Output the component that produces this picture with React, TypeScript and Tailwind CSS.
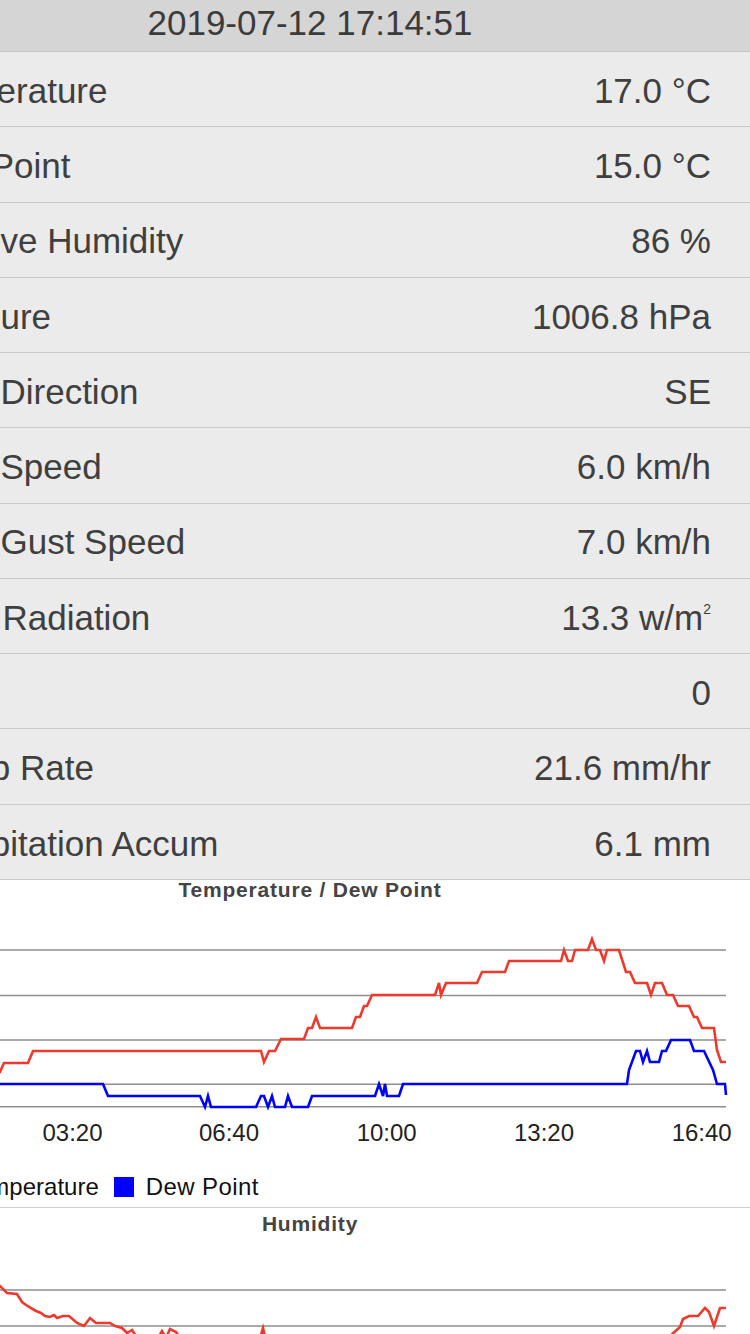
import React from 'react';

interface Reading {
    label: string;
    value: React.ReactNode;
}

const readings: Reading[] = [
    { label: 'Temperature', value: '17.0 °C' },
    { label: 'Dew Point', value: '15.0 °C' },
    { label: 'Relative Humidity', value: '86 %' },
    { label: 'Pressure', value: '1006.8 hPa' },
    { label: 'Wind Direction', value: 'SE' },
    { label: 'Wind Speed', value: '6.0 km/h' },
    { label: 'Wind Gust Speed', value: '7.0 km/h' },
    {
        label: 'Solar Radiation',
        value: (
            <>
                13.3 w/m<sup className="text-[14px] -top-[1.1em]">2</sup>
            </>
        ),
    },
    { label: 'UV', value: '0' },
    { label: 'Precip Rate', value: '21.6 mm/hr' },
    { label: 'Precipitation Accum', value: '6.1 mm' },
];

// chart coords are screen x, y relative to the svg top
const tempLine =
    '-10,180 0,172 4,163 28,163 33,151 261,151 264,162 269,151 275,151 281,139 304,139 308,128 312,128 316,117 320,128 352,128 356,117 360,117 364,106 367,106 372,95 435,95 439,83 441,95 446,83 477,83 482,72 505,72 509,61 561,61 564,50 568,61 572,61 575,50 588,50 592,39 596,50 600,50 604,61 607,50 619,50 626,72 630,72 635,83 647,83 651,95 655,83 662,83 667,95 673,95 678,106 689,106 694,117 697,117 702,128 714,128 717,150 721,162 726,162';

const dewLine =
    '-10,184 103,184 108,196 200,196 205,207 208,196 211,207 256,207 261,196 264,196 268,207 272,196 275,207 285,207 288,196 292,207 308,207 312,196 375,196 379,184 383,196 385,184 387,196 399,196 403,184 627,184 629,170 636,151 640,151 643,162 647,151 650,162 659,162 662,151 666,151 671,140 690,140 694,151 704,151 713,170 717,184 725,184 726,195';

const humidityLine =
    '-10,40 0,46 7,53 17,54 22,62 29,67 36,71 41,73 45,76 50,77 54,75 57,78 63,76 69,76 77,83 84,86 90,78 96,83 110,83 115,86 122,88 127,93 132,90 136,96 145,105 158,98 162,91 166,98 170,89 176,92 182,100 200,110 258,105 263,88 267,105 400,115 600,110 660,105 670,96 680,87 683,79 689,76 698,76 705,68 709,72 714,86 720,68 726,68';

const ticks = [
    { x: 72.5, label: '03:20' },
    { x: 229, label: '06:40' },
    { x: 386.7, label: '10:00' },
    { x: 544, label: '13:20' },
    { x: 701.7, label: '16:40' },
];

const ChartTitle: React.FC<{ title: string; className: string }> = ({ title, className }) => (
    <div className={`flex justify-center text-[21px] font-bold text-[#444] tracking-[0.8px] ${className}`}>
        {title}
    </div>
);

export default function App() {
    return (
        <div className="w-[750px] h-[1334px] overflow-hidden bg-white font-['Liberation_Sans',Arial,sans-serif]">
            {/* the view is scrolled sideways, so the left of every row sits off screen */}
            <div className="-ml-[130px] w-[880px]">
                <div className="h-[52px] pb-[4px] bg-[#d5d5d5] border-b border-[#c6c6c6] flex items-center justify-center text-[35px] text-[#3b3b3b]">
                    2019-07-12 17:14:51
                </div>

                {readings.map((r) => (
                    <div
                        key={r.label}
                        className="h-[75.27px] pt-[4px] bg-[#ebebeb] border-b border-[#c9c9c9] flex items-center justify-between pl-[41px] pr-[39px] text-[35px] text-[#3f3f3f]"
                    >
                        <span className="whitespace-nowrap">{r.label}</span>
                        <span className="whitespace-nowrap">{r.value}</span>
                    </div>
                ))}

                <div className="bg-white">
                    <ChartTitle title="Temperature / Dew Point" className="h-[20px] leading-[20px]" />
                    <svg width={880} height={250} viewBox="-130 0 880 250" className="block">
                        {[50, 95.5, 140, 184.3, 206.7].map((y) => (
                            <line key={y} x1={-130} x2={726} y1={y} y2={y} stroke="#8e8e8e" strokeWidth={1.5} />
                        ))}
                        <polyline points={tempLine} fill="none" stroke="#ee3a2c" strokeWidth={2.6} />
                        <polyline points={dewLine} fill="none" stroke="#0000ff" strokeWidth={2.6} />
                        {ticks.map((t) => (
                            <text key={t.label} x={t.x} y={240.5} textAnchor="middle" fontSize={24} fill="#222">
                                {t.label}
                            </text>
                        ))}
                    </svg>

                    <div className="h-[58px] pt-[18px] border-b border-[#cfcfcf] flex items-center pl-[62px] text-[24px] text-[#111]">
                        <span className="w-[20px] h-[20px] bg-[#ee3a2c]" />
                        <span className="ml-[12px]">Temperature</span>
                        <span className="ml-[15px] w-[20px] h-[20px] bg-[#0000ff]" />
                        <span className="ml-[12px] tracking-[0.4px]">Dew Point</span>
                    </div>

                    <ChartTitle title="Humidity" className="h-[32px] leading-[32px]" />
                    <svg width={880} height={200} viewBox="-130 0 880 200" className="block">
                        {[50, 86].map((y) => (
                            <line key={y} x1={-130} x2={726} y1={y} y2={y} stroke="#8e8e8e" strokeWidth={1.5} />
                        ))}
                        <polyline points={humidityLine} fill="none" stroke="#ee3a2c" strokeWidth={2.6} />
                    </svg>
                </div>
            </div>
        </div>
    );
}
